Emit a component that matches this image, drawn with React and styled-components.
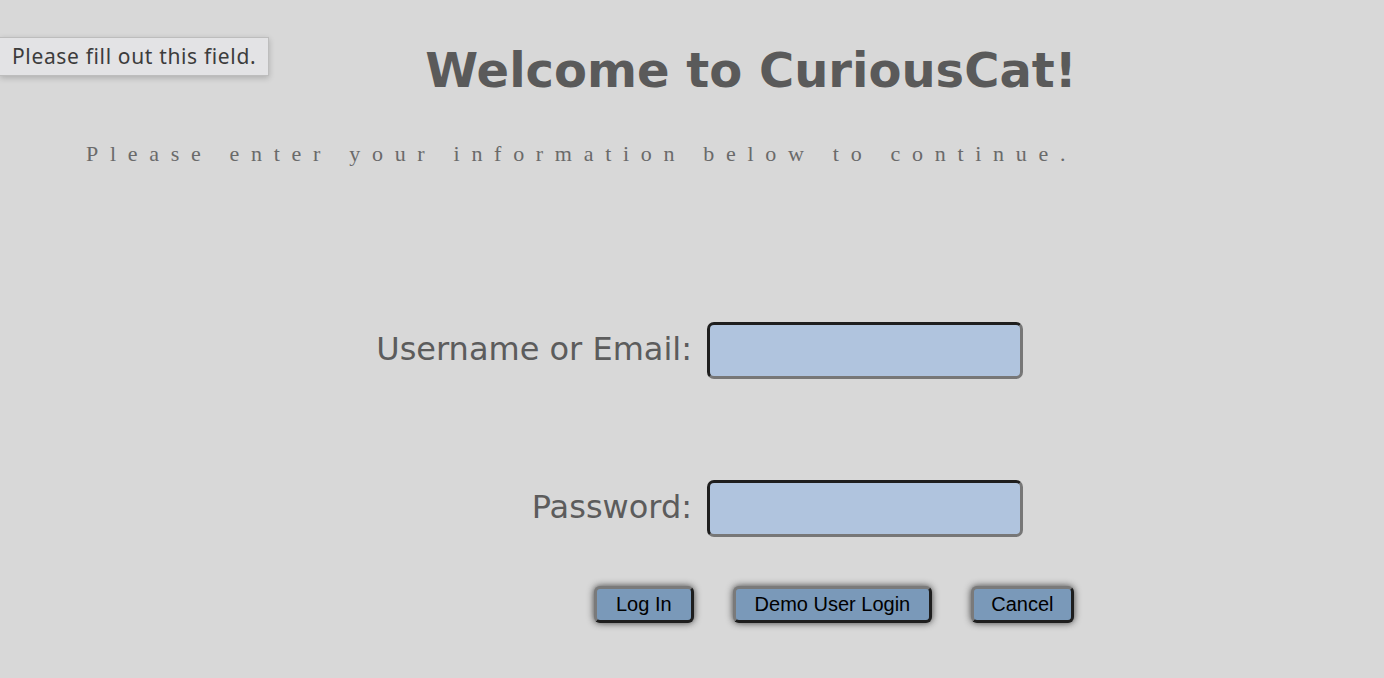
import React from 'react'
import styled, { createGlobalStyle } from 'styled-components'

const GlobalStyle = createGlobalStyle`
  html, body {
    margin: 0;
    padding: 0;
    background: #d8d8d8;
  }
`

const Page = styled.div`
  position: relative;
  min-height: 678px;
  background: #d8d8d8;
  overflow: hidden;
`

const Title = styled.h1`
  margin: 0;
  padding: 38px 0 0 118px;
  text-align: center;
  font-family: Verdana, "DejaVu Sans", sans-serif;
  font-size: 48px;
  font-weight: bold;
  line-height: 64px;
  color: #5a5a5a;
`

const Subtitle = styled.p`
  margin: 39px 0 0;
  padding-left: 86px;
  font-family: "Liberation Serif", "Times New Roman", serif;
  font-size: 22px;
  letter-spacing: 11.7px;
  line-height: 26px;
  color: #6a6a6a;
`

const Form = styled.form`
  display: grid;
  grid-template-columns: 400px 316px;
  column-gap: 15px;
  row-gap: 101px;
  align-items: center;
  margin-top: 155px;
  padding-left: 292px;
`

const Label = styled.label`
  padding-bottom: 3px;
  text-align: right;
  font-family: Verdana, "DejaVu Sans", sans-serif;
  font-size: 32px;
  color: #5c5c5c;
`

const Field = styled.input`
  box-sizing: border-box;
  width: 316px;
  height: 57px;
  border: 3px solid;
  border-color: #1e1e1e #777777 #777777 #1e1e1e;
  border-radius: 7px;
  background: #b0c4de;
  outline: none;
`

const Actions = styled.div`
  display: flex;
  gap: 39px;
  margin-top: 49px;
  padding-left: 594px;
`

const ActionButton = styled.button`
  box-sizing: border-box;
  height: 37px;
  padding: 0 ${p => p.$pad || 19}px;
  border: 3px solid;
  border-color: #7a7a7a #1e1e1e #1e1e1e #7a7a7a;
  border-radius: 6px;
  background: #7a99b9;
  box-shadow: 0 0 7px rgba(20, 20, 20, 0.8);
  font-family: "Liberation Sans", Arial, sans-serif;
  font-size: 20px;
  color: #000;
`

const Bubble = styled.div`
  position: absolute;
  top: 37px;
  left: 0;
  box-sizing: border-box;
  width: 269px;
  height: 39px;
  padding-left: 12px;
  background: #e3e3e5;
  border: 1px solid #bdbdbd;
  border-left: none;
  box-shadow: 0 2px 6px rgba(0, 0, 0, 0.2);
  font-family: "Noto Sans", "Open Sans", sans-serif;
  font-size: 21px;
  letter-spacing: 0.65px;
  line-height: 37px;
  color: #3c3c3c;
`

export default function App() {
  return (
    <Page>
      <GlobalStyle />
      <Title>Welcome to CuriousCat!</Title>
      <Subtitle>Please enter your information below to continue.</Subtitle>
      <Form onSubmit={e => e.preventDefault()}>
        <Label htmlFor="user">Username or Email:</Label>
        <Field id="user" type="text" />
        <Label htmlFor="pass">Password:</Label>
        <Field id="pass" type="password" />
      </Form>
      <Actions>
        <ActionButton>Log In</ActionButton>
        <ActionButton>Demo User Login</ActionButton>
        <ActionButton $pad={17}>Cancel</ActionButton>
      </Actions>
      <Bubble>Please fill out this field.</Bubble>
    </Page>
  )
}
